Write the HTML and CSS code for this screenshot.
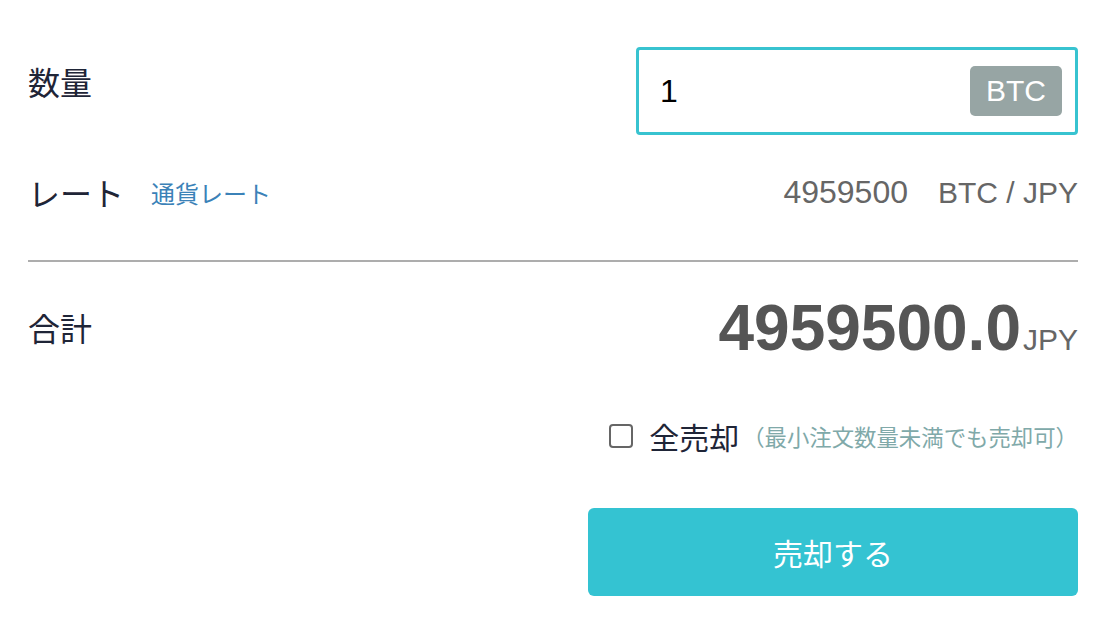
FILE: index.html
```html
<!DOCTYPE html>
<html lang="ja">
<head>
<meta charset="utf-8">
<title>売却</title>
<link rel="stylesheet" href="styles.css">
</head>
<body>
<div class="form">
  <div class="row row-qty">
    <div class="label">数量</div>
    <div class="input">
      <span class="input-value">1</span>
      <span class="badge">BTC</span>
    </div>
  </div>
  <div class="row row-rate">
    <div class="label-group">
      <span class="label">レート</span>
      <a class="rate-link">通貨レート</a>
    </div>
    <div class="rate-value">
      <span class="rate-num">4959500</span>
      <span class="rate-pair">BTC / JPY</span>
    </div>
  </div>
  <div class="divider"></div>
  <div class="row row-total">
    <div class="label label-total">合計</div>
    <div class="total"><span class="total-num">4959500.0</span><span class="total-unit">JPY</span></div>
  </div>
  <div class="row row-check">
    <span class="checkbox"></span>
    <span class="check-label">全売却</span>
    <span class="check-note">（最小注文数量未満でも売却可）</span>
  </div>
  <div class="row row-button">
    <button class="sell">売却する</button>
  </div>
</div>
</body>
</html>
```
FILE: styles.css
```css
html, body {
  margin: 0;
  padding: 0;
  background: #ffffff;
}
body {
  font-family: "Liberation Sans", "Noto Sans CJK JP", sans-serif;
  color: #1f2537;
}
.form {
  padding: 47px 20px 0 28px;
}
.row {
  display: flex;
  justify-content: space-between;
}
.row-qty {
  align-items: flex-start;
}
.label {
  font-family: "Noto Sans CJK JP", sans-serif;
  font-size: 32px;
  line-height: 48px;
  color: #1f2537;
}
.row-qty .label {
  margin-top: 10px;
}
.input {
  box-sizing: border-box;
  width: 442px;
  height: 88px;
  border: 3px solid #38c3d0;
  border-radius: 4px;
  display: flex;
  align-items: center;
  justify-content: space-between;
  padding: 0 13px 0 21px;
}
.input-value {
  font-size: 32px;
  color: #000;
}
.badge {
  width: 92px;
  height: 50px;
  border-radius: 5px;
  background: #97a5a4;
  color: #fff;
  font-size: 30px;
  display: flex;
  align-items: center;
  justify-content: center;
}
.row-rate {
  margin-top: 33px;
  height: 48px;
  align-items: center;
}
.label-group {
  display: flex;
  align-items: center;
}
.rate-link {
  font-family: "Noto Sans CJK JP", sans-serif;
  font-size: 24px;
  color: #3b82b8;
  margin-left: 27px;
}
.rate-value {
  color: #666;
  display: flex;
  align-items: baseline;
}
.rate-num {
  font-size: 32px;
}
.rate-pair {
  font-size: 30px;
  margin-left: 30px;
}
.divider {
  height: 2px;
  background: #adadad;
  margin-top: 44px;
}
.row-total {
  margin-top: 34px;
  align-items: flex-start;
}
.label-total {
  margin-top: 7px;
}
.total {
  font-size: 64px;
  line-height: 64px;
  height: 64px;
  color: #555;
}
.total-num {
  font-weight: bold;
}
.total-unit {
  font-size: 30px;
  line-height: 1;
  color: #666;
  margin-left: 2px;
}
.row-check {
  margin-top: 52px;
  height: 48px;
  justify-content: flex-end;
  align-items: center;
}
.checkbox {
  box-sizing: border-box;
  width: 24px;
  height: 24px;
  border: 2px solid #666;
  border-radius: 4px;
  margin-right: 16px;
}
.check-label {
  font-family: "Noto Sans CJK JP", sans-serif;
  font-size: 30px;
  color: #1f2537;
}
.check-note {
  font-family: "Noto Sans CJK JP", sans-serif;
  font-size: 22.4px;
  color: #80a9a9;
  margin-left: 3px;
}
.row-button {
  margin-top: 48px;
  justify-content: flex-end;
}
.sell {
  width: 490px;
  height: 88px;
  border: none;
  border-radius: 6px;
  background: #34c3d2;
  color: #fff;
  font-family: "Noto Sans CJK JP", sans-serif;
  font-size: 30px;
  padding: 0;
}
```
